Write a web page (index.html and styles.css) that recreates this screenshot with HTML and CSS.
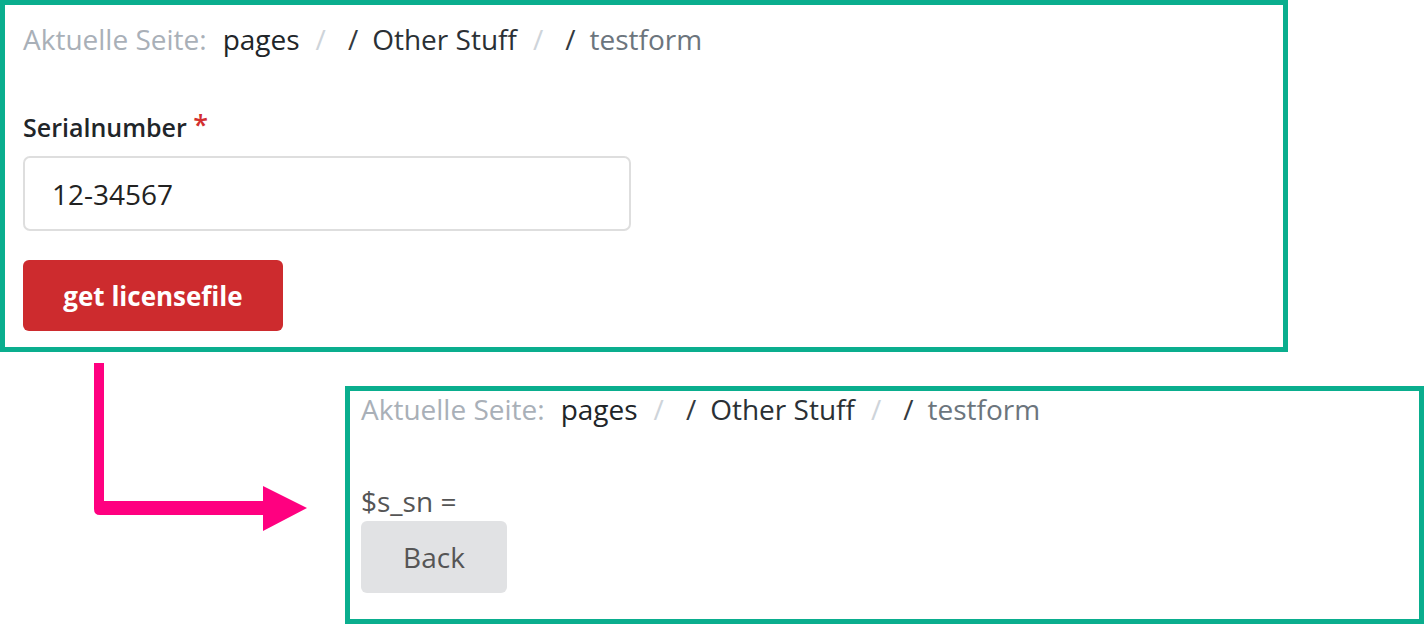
FILE: index.html
```html
<!DOCTYPE html>
<html lang="de">
<head>
    <meta charset="UTF-8">
    <meta name="viewport" content="width=device-width, initial-scale=1.0">
    <title>testform</title>
    <link rel="stylesheet" href="styles.css">
</head>
<body>
    <div class="shot shot-form">
        <nav class="crumbs">
            <span class="crumbs-label">Aktuelle Seite:</span>
            <span class="crumb">pages</span>
            <span class="crumb-sep">/</span>
            <span class="crumb crumb-link"><span class="crumb-slash">/</span>Other Stuff</span>
            <span class="crumb-sep">/</span>
            <span class="crumb crumb-current"><span class="crumb-slash">/</span>testform</span>
        </nav>
        <form class="license-form">
            <label for="serial" class="field-label">Serialnumber <span class="required">*</span></label>
            <input type="text" id="serial" name="serial" class="field-input" value="12-34567">
            <button type="submit" class="btn-red">get licensefile</button>
        </form>
    </div>

    <div class="result-row">
        <!-- annotation arrow -->
        <svg class="flow-arrow" width="213" height="168" viewBox="0 0 213 168">
            <path d="M0 0 H10 V138 H169 V123 L213 145 L169 168 V152 H6 Q0 152 0 146 Z" fill="#ff0080"/>
        </svg>
        <div class="shot shot-result">
            <nav class="crumbs">
                <span class="crumbs-label">Aktuelle Seite:</span>
                <span class="crumb">pages</span>
                <span class="crumb-sep">/</span>
                <span class="crumb crumb-link"><span class="crumb-slash">/</span>Other Stuff</span>
                <span class="crumb-sep">/</span>
                <span class="crumb crumb-current"><span class="crumb-slash">/</span>testform</span>
            </nav>
            <p class="result-text">$s_sn =</p>
            <button type="button" class="btn-grey">Back</button>
        </div>
    </div>
</body>
</html>
```

FILE: styles.css
```css
body {
    margin: 0;
    font-family: "Open Sans", "Liberation Sans", sans-serif;
    background-color: white;
    color: #212529;
}
.shot {
    box-sizing: border-box;
    border: 5px solid #0aae8e;
    background-color: white;
}
.shot-form {
    width: 1288px;
    height: 352px;
    padding: 14px 18px 0 18px;
}
.crumbs {
    display: flex;
    align-items: baseline;
    font-size: 28px;
    line-height: 40px;
    white-space: nowrap;
}
.crumbs-label {
    color: #a9b0b8;
    margin-right: 16px;
}
.crumb {
    color: #212529;
}
.crumb-sep {
    color: #ced4da;
    margin: 0 22px 0 16px;
}
.crumb-slash {
    color: #343a40;
    margin-right: 14px;
}
.crumb-link {
    color: #2b3035;
}
.crumb-current {
    color: #6c757d;
}
.license-form {
    display: flex;
    flex-direction: column;
    align-items: flex-start;
    margin-top: 46px;
}
.field-label {
    font-size: 25px;
    font-weight: 600;
    line-height: 39px;
    margin-bottom: 9px;
}
.required {
    color: #d32f2f;
    font-size: 27px;
    vertical-align: 2px;
}
.field-input {
    box-sizing: border-box;
    width: 608px;
    height: 75px;
    padding: 0 20px 0 27px;
    border: 2px solid #dedede;
    border-radius: 7px;
    font-family: inherit;
    font-size: 28px;
    color: #222;
    outline: none;
}
.btn-red {
    margin-top: 29px;
    height: 71px;
    width: 260px;
    border: none;
    border-radius: 6px;
    background-color: #cd2b2e;
    color: white;
    font-family: inherit;
    font-size: 26px;
    font-weight: 700;
    cursor: pointer;
}
.result-row {
    display: flex;
    align-items: flex-start;
    margin-top: 34px;
}
.flow-arrow {
    flex: none;
    margin: -23px 38px 0 94px;
}
.shot-result {
    flex: 1;
    height: 238px;
    padding: 0 11px 26px 11px;
}
.shot-result .crumbs {
    line-height: 36px;
}
.result-text {
    margin: 57px 0 2px 0;
    font-size: 28px;
    line-height: 35px;
    color: #555;
}
.btn-grey {
    width: 146px;
    height: 72px;
    border: none;
    border-radius: 6px;
    background-color: #e1e2e4;
    color: #555;
    font-family: inherit;
    font-size: 28px;
    cursor: pointer;
}
```
